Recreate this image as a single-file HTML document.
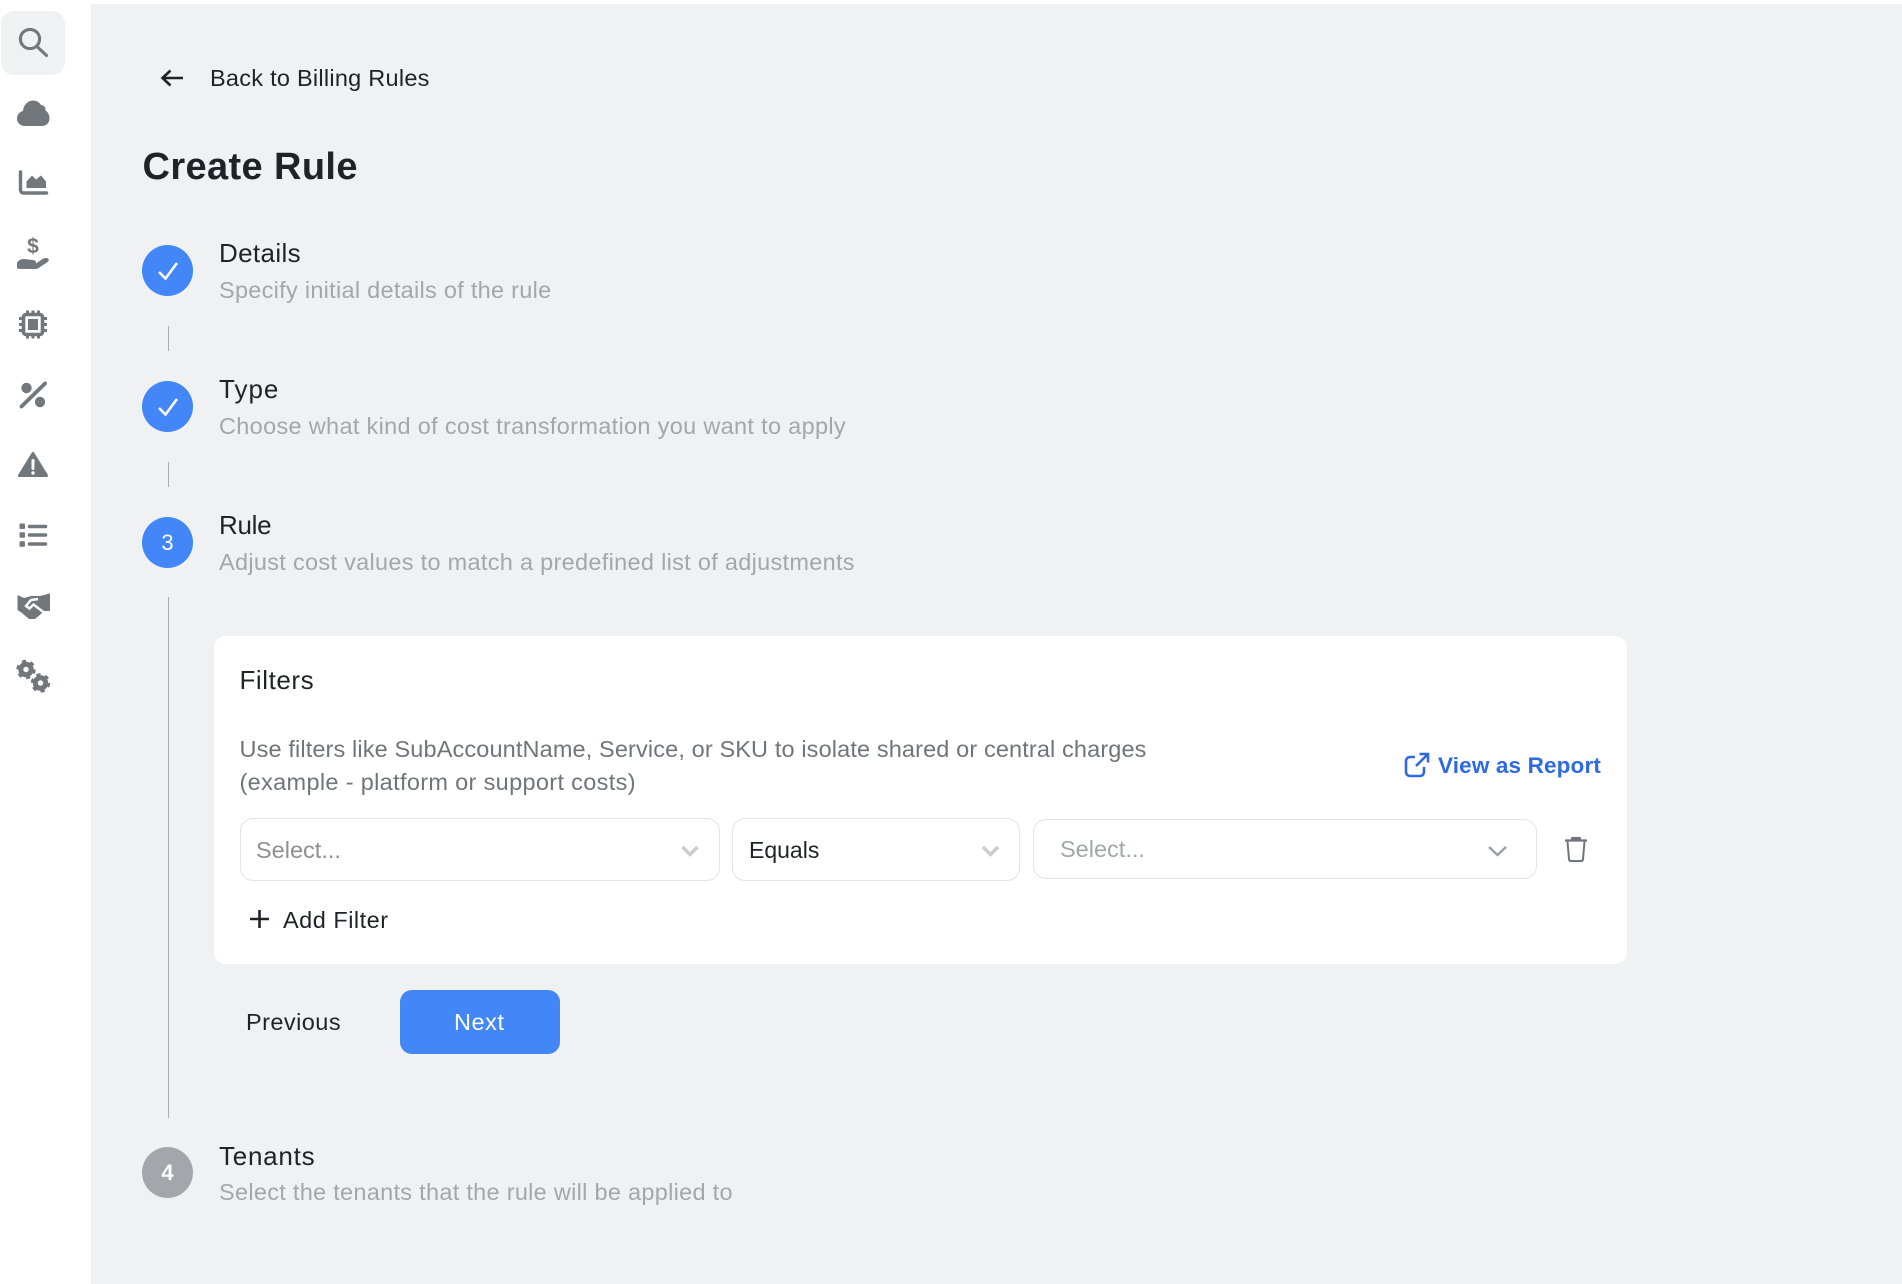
<!DOCTYPE html>
<html lang="en">
<head>
<meta charset="utf-8">
<title>Create Rule</title>
<style>
html,body{margin:0;padding:0;width:1902px;height:1284px;overflow:hidden;background:#fff;font-family:"Liberation Sans",sans-serif;}
.main{position:absolute;left:91px;top:4px;width:1811px;height:1280px;background:#f0f1f3;}
.t{position:absolute;white-space:nowrap;font-size:23.5px;line-height:30px;letter-spacing:.29px;color:#1f2328;}
.h{font-size:26px;letter-spacing:.35px;}
.s{color:#a3a7ab;}
.d{color:#6f757b;}
.circle{position:absolute;left:142px;width:51px;height:51px;border-radius:50%;background:#4286f7;color:#fff;font-size:22px;line-height:51px;text-align:center;}
.line{position:absolute;left:168px;width:1px;background:#a9adb1;}
.card{position:absolute;left:214px;top:636px;width:1413px;height:328px;background:#fff;border-radius:12px;}
.sel{position:absolute;box-sizing:border-box;background:#fff;border:1px solid #e3e4e6;border-radius:13px;}
.btn{position:absolute;left:400px;top:990px;width:160px;height:64px;background:#4286f7;border-radius:12px;}
svg{position:absolute;left:0;top:0;}
</style>
</head>
<body>
<div class="main"></div>

<svg width="91" height="720" viewBox="0 0 91 720">
  <rect x="1" y="11" width="64" height="64" rx="13" fill="#f0f1f3"/>
  <g fill="none" stroke="#72777c" stroke-width="3.4" stroke-linecap="round">
    <circle cx="30" cy="39" r="9.6" stroke-width="3.1"/>
    <path d="M37.5 47 L46.5 55.5" stroke-width="3.1"/>
    <path d="M20.5 172 V190 a3 3 0 0 0 3 3 H46.5"/>
    <rect x="23.5" y="314.5" width="19" height="20" rx="2.5" stroke-width="3.6"/>
    <path d="M19 318.5 H23 M19 324.5 H23 M19 330.5 H23 M43 318.5 H47 M43 324.5 H47 M43 330.5 H47 M27.5 310.5 V314 M33 310.5 V314 M38.5 310.5 V314 M27.5 335 V338.5 M33 335 V338.5 M38.5 335 V338.5" stroke-linecap="butt" stroke-width="3"/>
    <path d="M29.5 526.5 H45.5 M29.5 535 H45.5 M29.5 544 H45.5" stroke-width="3.6"/>
  </g>
  <g fill="#72777c">
    <path d="M25 126 C20 126 17 122.5 17 118.5 C17 114.5 20 111.5 23 111 C23.5 105 28 100.5 33 100.5 C36.5 100.5 39 102 41 105 C44 105 46 108 45.5 110.5 C48 112 49.5 115 49.5 118.5 C49.5 123 46 126 42 126 Z"/>
    <path d="M26.5 188 V181.5 L32 175.5 L36 179.5 L41 175.5 L46 181.5 V188 Z"/>
    <text x="33" y="253" font-family="Liberation Sans,sans-serif" font-size="21" font-weight="bold" text-anchor="middle">$</text>
    <path d="M17 268.5 V262.5 Q20 258.5 24 259 L33 260 Q36 260.5 36 262.5 L36 263.5 L41 260 Q45 257 48 258.5 Q50 260 47 262.5 L40 267 Q38 269 35 269 H21 Z"/>
    <rect x="28" y="319" width="10" height="11"/>
    <circle cx="26.5" cy="388" r="5.2"/>
    <circle cx="40" cy="402" r="5.2"/>
    <path d="M17.5 595 L24 598 L31 596 H40 L50 593.5 V611 L44.5 611 L35 619 H29 L22 613 L17.5 610 Z"/>
    <rect x="19.5" y="523.5" width="5.5" height="5.5" rx="1"/>
    <rect x="19.5" y="532.3" width="5.5" height="5.5" rx="1"/>
    <rect x="19.5" y="541.2" width="5.5" height="5.5" rx="1"/>
  </g>
  <path d="M45 383.5 L21.5 406.5" stroke="#72777c" stroke-width="3.8" stroke-linecap="round"/>
  <path d="M33 453.5 L46.5 475.5 H19.5 Z" fill="#72777c" stroke="#72777c" stroke-width="3" stroke-linejoin="round"/>
  <path d="M33 460.5 V468.5" stroke="#fff" stroke-width="3" stroke-linecap="round"/>
  <circle cx="33" cy="473" r="1.7" fill="#fff"/>
  <path d="M38 599 L31 600 L26 606 L29.5 608.5 L33.5 604.5 L44 612.5" fill="none" stroke="#fff" stroke-width="2.4"/>
  <g fill="none" stroke="#72777c">
    <circle cx="26" cy="669.5" r="5.2" stroke-width="5"/>
    <circle cx="26" cy="669.5" r="8" stroke-width="3.4" stroke-dasharray="4 4.38"/>
    <circle cx="40.5" cy="683" r="5.2" stroke-width="5"/>
    <circle cx="40.5" cy="683" r="8" stroke-width="3.4" stroke-dasharray="4 4.38"/>
  </g>
</svg>

<svg width="200" height="110" viewBox="0 0 200 110">
  <path d="M183 78 H163 M170.5 70.5 L162.5 78 L170.5 85.5" fill="none" stroke="#1f2328" stroke-width="2.6"/>
</svg>
<div class="t" style="left:210px;top:63px;letter-spacing:.26px;">Back to Billing Rules</div>
<div class="t" style="left:142.5px;top:144px;font-size:38px;font-weight:bold;line-height:46px;letter-spacing:.38px;">Create Rule</div>

<div class="circle" style="top:245px;"></div>
<div class="t h" style="left:219px;top:238px;">Details</div>
<div class="t s" style="left:219px;top:275px;letter-spacing:.28px;">Specify initial details of the rule</div>
<div class="line" style="top:326px;height:25px;"></div>

<div class="circle" style="top:381px;"></div>
<div class="t h" style="left:219px;top:374px;letter-spacing:1px;">Type</div>
<div class="t s" style="left:219px;top:411px;letter-spacing:.32px;">Choose what kind of cost transformation you want to apply</div>
<div class="line" style="top:462px;height:25px;"></div>

<div class="circle" style="top:517px;">3</div>
<div class="t h" style="left:219px;top:510px;letter-spacing:-.3px;">Rule</div>
<div class="t s" style="left:219px;top:547px;letter-spacing:.3px;">Adjust cost values to match a predefined list of adjustments</div>
<div class="line" style="top:597px;height:521px;"></div>

<div class="circle" style="top:1147px;background:#a3a7ab;font-weight:bold;">4</div>
<div class="t h" style="left:219px;top:1141px;letter-spacing:.75px;">Tenants</div>
<div class="t s" style="left:219px;top:1177px;">Select the tenants that the rule will be applied to</div>

<div class="card"></div>
<div class="t h" style="left:239.5px;top:665px;letter-spacing:.55px;">Filters</div>
<div class="t d" style="left:239.5px;top:734px;letter-spacing:.13px;">Use filters like SubAccountName, Service, or SKU to isolate shared or central charges</div>
<div class="t d" style="left:239.5px;top:767px;letter-spacing:.335px;">(example - platform or support costs)</div>
<div class="t" style="left:1438px;top:751px;font-size:22.5px;font-weight:bold;letter-spacing:.15px;color:#2d6ae3;">View as Report</div>

<div class="sel" style="left:240px;top:818px;width:480px;height:63px;"></div>
<div class="t" style="left:256px;top:835px;color:#8f8f8f;letter-spacing:0;">Select...</div>
<div class="sel" style="left:732px;top:818px;width:288px;height:63px;"></div>
<div class="t" style="left:749px;top:835px;font-size:23px;letter-spacing:0;">Equals</div>
<div class="sel" style="left:1033px;top:819px;width:504px;height:60px;"></div>
<div class="t s" style="left:1060px;top:834px;letter-spacing:0;">Select...</div>

<div class="t" style="left:283px;top:905px;letter-spacing:.5px;">Add Filter</div>
<div class="t" style="left:246px;top:1007px;letter-spacing:.45px;">Previous</div>
<div class="btn"></div>
<div class="t" style="left:454px;top:1007px;color:#fff;letter-spacing:.55px;">Next</div>

<svg width="1902" height="1284" viewBox="0 0 1902 1284" style="pointer-events:none;">
  <g fill="none" stroke="#fff" stroke-width="2.6">
    <path d="M159 272 L165.5 278.5 L177 263"/>
    <path d="M159 408 L165.5 414.5 L177 399"/>
  </g>
  <path d="M1415 757 H1410 a4 4 0 0 0 -4 4 V772 a4 4 0 0 0 4 4 H1420 a4 4 0 0 0 4 -4 V767 M1416 766 L1428 754 M1419.5 754 H1428 V762.5" fill="none" stroke="#2d6ae3" stroke-width="2.6"/>
  <g fill="none" stroke="#cccccc" stroke-width="3.4">
    <path d="M682.5 847 L690 854.5 L697.5 847"/>
    <path d="M983 847 L990.5 854.5 L998 847"/>
  </g>
  <path d="M1489 847 L1497.5 855 L1506 847" fill="none" stroke="#9a9ea3" stroke-width="2.4"/>
  <path d="M1571 840 V838 Q1571 837 1572 837 H1580 Q1581 837 1581 838 V840 Z" fill="#6f757b"/>
  <path d="M1565 840.5 H1587" stroke="#6f757b" stroke-width="2.2"/>
  <path d="M1567.5 841 L1569 859 Q1569 861 1571 861 H1581 Q1583 861 1583 859 L1584.5 841" fill="none" stroke="#6f757b" stroke-width="2"/>
  <path d="M259.5 910 V928 M250 919 H269" stroke="#1f2328" stroke-width="2.6"/>
</svg>
</body>
</html>
